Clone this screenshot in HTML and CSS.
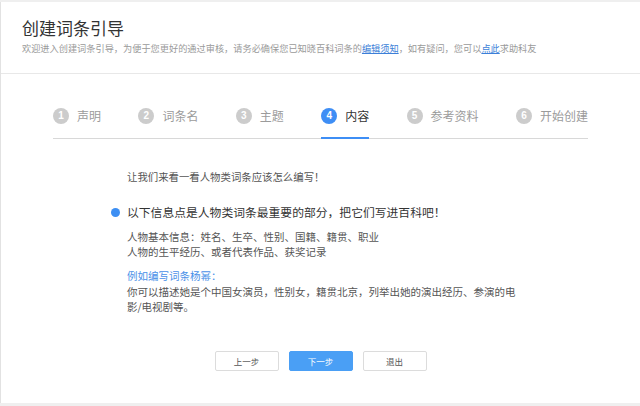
FILE: index.html
```html
<!DOCTYPE html>
<html>
    <head>
        <meta charset="utf-8">
        <link rel="stylesheet" href="styles.css">
    </head>
    <body>
        <div id="page">
            <div id="header">
                <h1>创建词条引导</h1>
                <p class="intro">欢迎进入创建词条引导，为便于您更好的通过审核，请务必确保您已知晓百科词条的<a href="#">编辑须知</a>，如有疑问，您可以<a href="#">点此</a>求助科友</p>
            </div>
            <div id="steps">
                <div class="step"><span class="num">1</span><span class="label">声明</span></div>
                <div class="step"><span class="num">2</span><span class="label">词条名</span></div>
                <div class="step"><span class="num">3</span><span class="label">主题</span></div>
                <div class="step active"><span class="num">4</span><span class="label">内容</span></div>
                <div class="step"><span class="num">5</span><span class="label">参考资料</span></div>
                <div class="step"><span class="num">6</span><span class="label">开始创建</span></div>
            </div>
            <div id="content">
                <p class="lead">让我们来看一看人物类词条应该怎么编写！</p>
                <h2><span class="dot"></span>以下信息点是人物类词条最重要的部分，把它们写进百科吧！</h2>
                <p class="info">人物基本信息：姓名、生卒、性别、国籍、籍贯、职业<br>人物的生平经历、或者代表作品、获奖记录</p>
                <p class="example">例如编写词条杨幂：</p>
                <p class="info">你可以描述她是个中国女演员，性别女，籍贯北京，列举出她的演出经历、参演的电影/电视剧等。</p>
            </div>
            <div id="actions">
                <button>上一步</button>
                <button class="primary">下一步</button>
                <button>退出</button>
            </div>
        </div>
    </body>
</html>
```
FILE: styles.css
```css
body{
    margin:0px;
    background:#efefef;
    font-family:"Noto Sans CJK SC","Noto Sans",sans-serif;
}
#page{
    margin-top:2px;
    height:401px;
    background:white;
    border-left:1px solid #e2e2e2;
    box-sizing:border-box;
}
#header{
    padding:16px 22px 18px 21px;
    border-bottom:1px solid #e8e8e8;
}
h1{
    margin:0px;
    font-size:17px;
    line-height:20px;
    font-weight:normal;
    color:#333;
}
.intro{
    margin:4px 0 0 0;
    font-size:9.2px;
    line-height:13px;
    color:#9a9a9a;
}
.intro a{
    color:#3c7fd8;
}
#steps{
    display:flex;
    justify-content:space-between;
    width:535px;
    margin:34px auto 0px;
    border-bottom:1px solid #d8d8d8;
}
.step{
    display:flex;
    align-items:center;
    padding-bottom:13px;
    border-bottom:2px solid transparent;
    margin-bottom:-1px;
}
.num{
    width:16px;
    height:16px;
    border-radius:50%;
    background:#cccccc;
    color:white;
    font-family:"Liberation Sans",sans-serif;
    font-size:10px;
    font-weight:700;
    line-height:16px;
    text-align:center;
}
.label{
    margin-left:8px;
    font-size:12px;
    line-height:16px;
    color:#9b9b9b;
}
.active{
    border-bottom-color:#3e8ef5;
}
.active .num{
    background:#3e8ef5;
}
.active .label{
    color:#333;
}
#content{
    width:402px;
    margin:30px 0px 0px 110px;
    padding-left:16px;
    color:#555;
}
#content p{
    margin:0px;
    font-size:10.5px;
    line-height:15px;
}
#content .lead{
    font-size:10.4px;
}
h2{
    position:relative;
    margin:19px 0 8px 0;
    font-size:11.8px;
    line-height:18px;
    font-weight:normal;
    color:#333;
}
.dot{
    position:absolute;
    left:-16px;
    top:4.5px;
    width:9px;
    height:9px;
    border-radius:50%;
    background:#3d8ff3;
}
#content .example{
    margin-top:9px;
    line-height:16px;
    color:#4a90e8;
}
#actions{
    display:flex;
    justify-content:center;
    gap:10px;
    margin-top:37px;
}
button{
    width:64px;
    height:20px;
    padding:0px;
    border:1px solid #dcdcdc;
    border-radius:2px;
    background:white;
    color:#555;
    font-family:"Noto Sans CJK SC",sans-serif;
    font-size:8.5px;
    outline:none;
}
button.primary{
    background:#4a9ff5;
    border-color:#4a9ff5;
    color:white;
}
```
